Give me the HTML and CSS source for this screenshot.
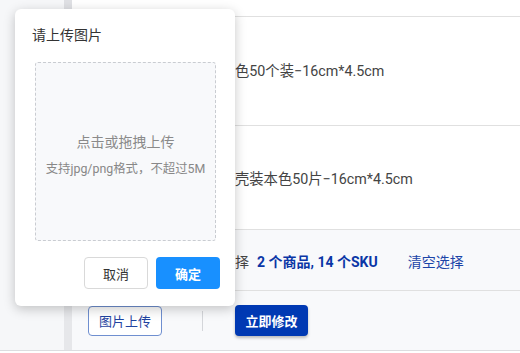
FILE: index.html
```html
<!DOCTYPE html>
<html lang="zh">
<head>
    <meta charset="UTF-8">
    <meta name="viewport" content="width=device-width, initial-scale=1.0">
    <title>批量修改</title>
    <link rel="stylesheet" href="styles.css">
</head>
<body>
    <div class="page">
        <div class="sidebar"></div>
        <div class="gutter"><div class="gutter-top"></div></div>
        <div class="main">
            <div class="table-head"></div>
            <div class="row"><span class="name">色50个装−16cm*4.5cm</span></div>
            <div class="row row-2"><span class="name">壳装本色50片−16cm*4.5cm</span></div>
            <div class="summary">
                <span class="label">择</span>
                <span class="count">2 个商品, 14 个SKU</span>
                <a class="clear" href="#">清空选择</a>
            </div>
            <div class="actions">
                <button class="btn-outline">图片上传</button>
                <span class="divider"></span>
                <button class="btn-primary">立即修改</button>
            </div>
        </div>
    </div>

    <div class="popup">
        <div class="popup-title">请上传图片</div>
        <div class="dropzone">
            <div class="drop-main">点击或拖拽上传</div>
            <div class="drop-hint">支持jpg/png格式，不超过5M</div>
        </div>
        <div class="popup-buttons">
            <button class="btn-cancel">取消</button>
            <button class="btn-ok">确定</button>
        </div>
    </div>
</body>
</html>
```

FILE: styles.css
```css
body {
    margin: 0;
    font-family: Roboto, "Noto Sans CJK SC", sans-serif;
    background: #ffffff;
    width: 520px;
    height: 353px;
    overflow: hidden;
    position: relative;
}

.page {
    display: flex;
    height: 350px;
    border-bottom: 1px solid #dcdde0;
}

.sidebar {
    width: 64px;
    background-color: #f6f7f9;
}

.gutter {
    width: 8px;
    background-color: #e6e7ea;
}

.gutter-top {
    width: 16px;
    height: 9px;
    background-color: #dfe0e4;
}

.main {
    flex: 1;
    display: flex;
    flex-direction: column;
    background-color: #fff;
}

.table-head {
    height: 16px;
    border-bottom: 1px solid #e0e0e0;
}

.row {
    height: 109px;
    display: flex;
    align-items: center;
    padding-left: 163px;
    padding-bottom: 4px;
    box-sizing: border-box;
    border-bottom: 1px solid #e0e0e0;
    font-size: 14.3px;
    color: #444;
}

.row-2 {
    height: 104px;
    padding-bottom: 0;
}

.summary {
    height: 61px;
    display: flex;
    align-items: center;
    padding-left: 163px;
    padding-top: 2px;
    box-sizing: border-box;
    background-color: #f8f9fb;
    border-bottom: 1px solid #e0e0e0;
    font-size: 14px;
}

.summary .label {
    color: #444;
    margin-right: 8px;
}

.summary .count {
    color: #0a36a6;
    font-weight: bold;
}

.summary .clear {
    color: #1c45a8;
    text-decoration: none;
    margin-left: 30px;
}

.actions {
    flex: 1;
    display: flex;
    align-items: center;
    padding-left: 16px;
    background-color: #f8f9fb;
}

.btn-outline {
    width: 74px;
    height: 30px;
    border: 1px solid #6f8fd0;
    border-radius: 4px;
    background-color: #fff;
    color: #1f43a0;
    font-family: inherit;
    font-size: 13px;
    padding: 0;
}

.divider {
    width: 1px;
    height: 20px;
    background-color: #d4d6da;
    margin-left: 40px;
    margin-right: 32px;
}

.btn-primary {
    width: 73px;
    height: 31px;
    border: none;
    border-radius: 4px;
    background-color: #0039b3;
    color: #fff;
    font-family: inherit;
    font-size: 13px;
    font-weight: bold;
    padding: 0;
    box-shadow: 0 2px 3px rgba(0, 0, 0, 0.25);
}

.popup {
    position: absolute;
    left: 15px;
    top: 9px;
    width: 220px;
    height: 297px;
    background-color: #fff;
    border-radius: 6px;
    box-shadow: 0 3px 12px rgba(0, 0, 0, 0.22);
    padding: 0 16px 0 17px;
    box-sizing: border-box;
}

.popup-title {
    font-size: 14px;
    color: #333;
    margin-top: 17px;
    line-height: 18px;
}

.dropzone {
    margin: 18px 3px 0 3px;
    height: 179px;
    border: 1px dashed #c9ccd1;
    border-radius: 3px;
    background-color: #f8f9fb;
    display: flex;
    flex-direction: column;
    justify-content: center;
    align-items: center;
    padding-top: 4px;
    box-sizing: border-box;
}

.drop-main {
    font-size: 14px;
    color: #8a8a8a;
}

.drop-hint {
    font-size: 12.4px;
    color: #888;
    margin-top: 8px;
}

.popup-buttons {
    display: flex;
    justify-content: flex-end;
    gap: 8px;
    margin-top: 16px;
    margin-right: -1px;
}

.btn-cancel {
    width: 64px;
    height: 32px;
    background-color: #fff;
    border: 1px solid #d9d9d9;
    border-radius: 4px;
    color: #333;
    font-family: inherit;
    font-size: 13px;
    padding: 0;
}

.btn-ok {
    width: 64px;
    height: 32px;
    background-color: #1890ff;
    border: none;
    border-radius: 4px;
    color: #fff;
    font-family: inherit;
    font-size: 13px;
    font-weight: bold;
    padding: 0;
}
```
